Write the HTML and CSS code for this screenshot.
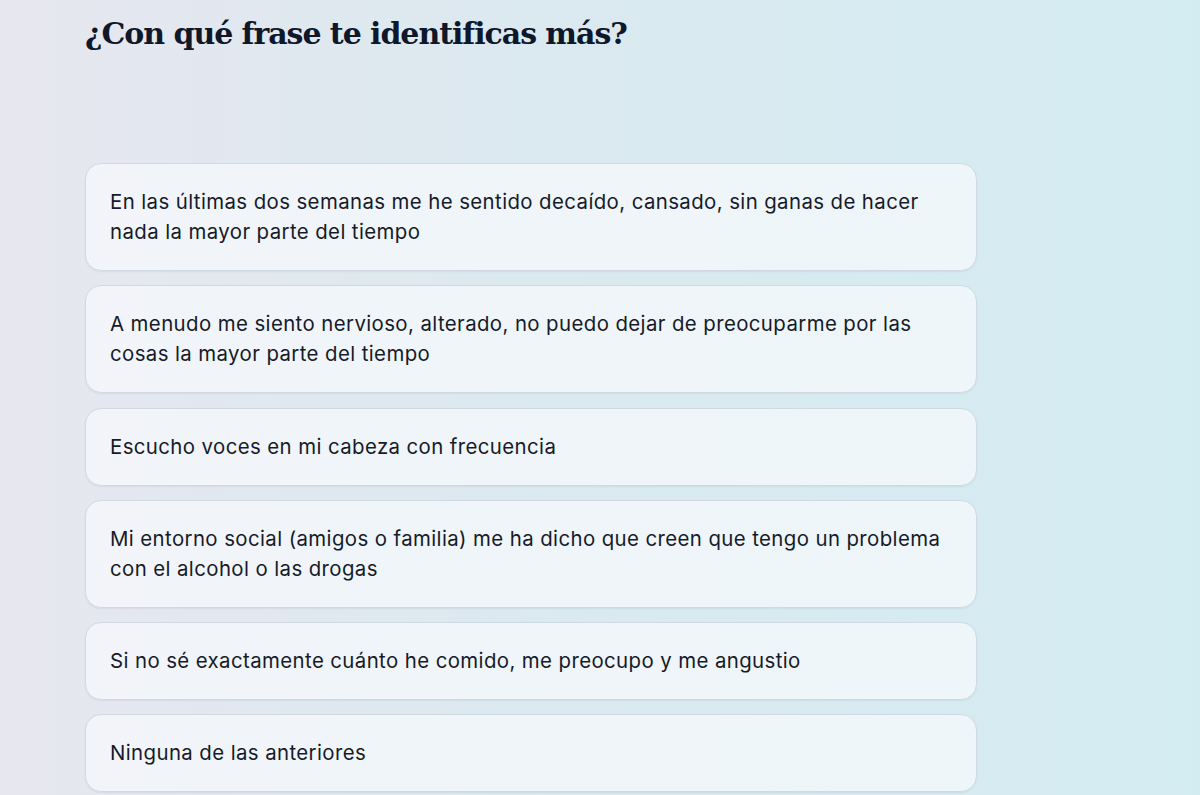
FILE: index.html
```html
<!DOCTYPE html>
<html lang="es">
<head>
    <meta charset="UTF-8">
    <meta name="viewport" content="width=device-width, initial-scale=1.0">
    <title>¿Con qué frase te identificas más?</title>
    <link rel="stylesheet" href="styles.css">
</head>
<body>
    <div class="page">
        <h1 class="question">¿Con qué frase te identificas más?</h1>

        <div class="options">
            <button class="option">En las últimas dos semanas me he sentido decaído, cansado, sin ganas de hacer nada la mayor parte del tiempo</button>
            <button class="option">A menudo me siento nervioso, alterado, no puedo dejar de preocuparme por las cosas la mayor parte del tiempo</button>
            <button class="option">Escucho voces en mi cabeza con frecuencia</button>
            <button class="option">Mi entorno social (amigos o familia) me ha dicho que creen que tengo un problema con el alcohol o las drogas</button>
            <button class="option">Si no sé exactamente cuánto he comido, me preocupo y me angustio</button>
            <button class="option">Ninguna de las anteriores</button>
        </div>
    </div>
</body>
</html>
```

FILE: styles.css
```css
* {
    margin: 0;
    padding: 0;
    box-sizing: border-box;
}

body {
    font-family: 'Inter', 'Noto Sans', sans-serif;
    background: linear-gradient(90deg, #e7e7ef 0%, #dbe9f0 45%, #d3ecf2 100%);
    color: #111827;
    min-height: 100vh;
    overflow: hidden;
}

.page {
    padding: 14px 0 0 85px;
    width: 977px;
}

.question {
    font-family: 'DejaVu Serif', 'Liberation Serif', serif;
    font-size: 30px;
    font-weight: 700;
    line-height: 40px;
    letter-spacing: -1.05px;
    color: #0f172a;
    margin-bottom: 109px;
}

.options {
    display: flex;
    flex-direction: column;
    gap: 14.3px;
}

.option {
    display: block;
    width: 100%;
    text-align: left;
    font-family: inherit;
    font-size: 20.4px;
    line-height: 30px;
    letter-spacing: 0.4px;
    color: #161b29;
    background: rgba(247, 250, 252, 0.72);
    border: 1px solid #d0d9e1;
    border-radius: 16px;
    padding: 23px 30px 23px 24px;
    box-shadow: 0 1px 2px rgba(15, 23, 42, 0.06);
    cursor: pointer;
}

.option:hover {
    background: rgba(255, 255, 255, 0.9);
}
```
